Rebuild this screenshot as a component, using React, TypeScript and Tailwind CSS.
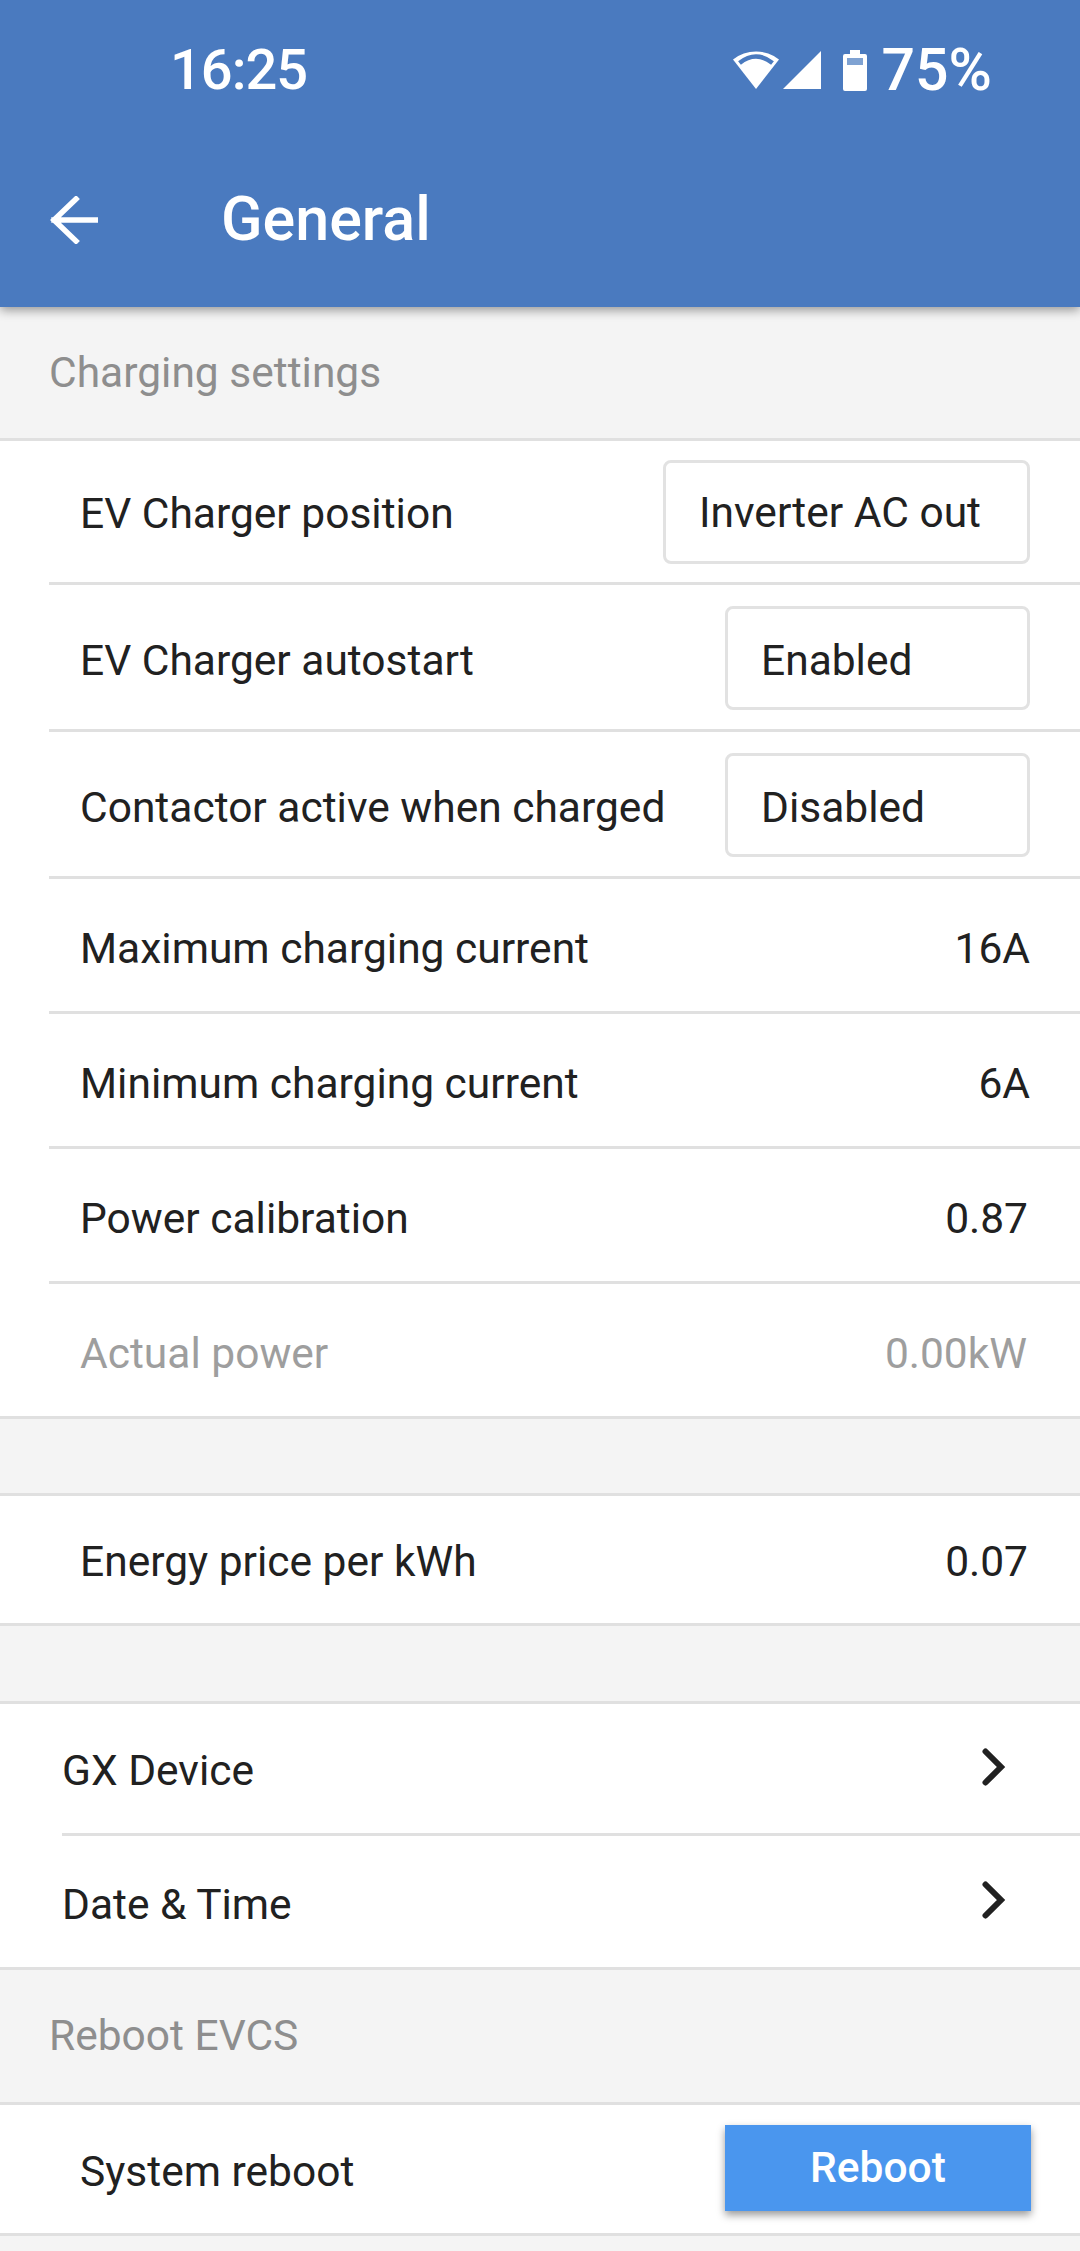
const font = { fontFamily: "Roboto, sans-serif" };

function Box({ w, s, children }: { w: string; s: string; children: React.ReactNode }) {
  return (
    <div className={`${w} ${s} h-[104px] border-[3px] border-[#e2e2e2] rounded-[8px] flex items-center pl-[33px] text-[42.5px] text-[#212121] shrink-0`}>
      {children}
    </div>
  );
}

function Line({ h, extra = "", children }: { h: string; extra?: string; children: React.ReactNode }) {
  return (
    <div className="pl-[49px] bg-white">
      <div className={`${h} ${extra} border-b-[3px] border-[#e0e0e0] flex items-center justify-between pr-[50px]`}>
        {children}
      </div>
    </div>
  );
}

function Label({ children, grey = false, s = "pt-[8px]" }: { children: React.ReactNode; grey?: boolean; s?: string }) {
  return <span className={`pl-[31px] ${s} text-[42.5px] ${grey ? "text-[#9e9e9e]" : "text-[#212121]"}`}>{children}</span>;
}

function Value({ children, grey = false, s = "pt-[8px]" }: { children: React.ReactNode; grey?: boolean; s?: string }) {
  return <span className={`${s} text-[42.5px] ${grey ? "text-[#9e9e9e]" : "text-[#212121]"}`}>{children}</span>;
}

function Chevron() {
  return (
    <svg width="24" height="38" viewBox="0 0 24 38" className="mb-[3px]">
      <path d="M3.5 3.5 L19 19 L3.5 34.5" fill="none" stroke="#212121" strokeWidth="6" strokeLinecap="round" />
    </svg>
  );
}

export default function App() {
  return (
    <div style={font} className="w-[1080px] h-[2251px] bg-[#f4f4f4] overflow-hidden">
      <header className="relative z-10 h-[307px] bg-[#4a7abf] shadow-[0_3px_10px_rgba(0,0,0,0.4)] text-white">
        <div className="h-[140px] flex items-start justify-between pl-[170px] pr-[88px] pt-[35px]">
          <span className="text-[56px] font-medium leading-[70px] tracking-[-1px]">16:25</span>
          <div className="flex items-center h-[70px]">
            <svg width="46" height="38" viewBox="0 0 46 38" className="mr-[4px]">
              <path d="M23 38 L0 8.5 A37 37 0 0 1 46 8.5 Z" fill="#fff" />
              <path d="M6.5 12 Q23 -1 39.5 12" fill="none" stroke="#4a7abf" strokeWidth="4.5" />
            </svg>
            <svg width="38" height="38" viewBox="0 0 38 38" className="mr-[22px]">
              <path d="M0 38 L38 0 V38 Z" fill="#fff" />
            </svg>
            <svg width="24" height="41" viewBox="0 0 24 41" className="mr-[14px]">
              <path d="M7 0 H17 V4 H22 Q24 4 24 6 V39 Q24 41 22 41 H2 Q0 41 0 39 V6 Q0 4 2 4 H7 Z" fill="#fff" />
              <rect x="4" y="8" width="16" height="7" fill="#7fa2d2" />
            </svg>
            <span className="text-[59px] font-medium leading-[70px]">75%</span>
          </div>
        </div>
        <div className="flex items-center h-[160px] pl-[50px]">
          <svg width="48" height="48" viewBox="0 0 48 48">
            <path d="M47 24 H4 M26 3 L4 24 L26 45" fill="none" stroke="#fff" strokeWidth="5.5" strokeLinecap="square" />
          </svg>
          <h1 className="ml-[123px] text-[61px] font-medium">General</h1>
        </div>
      </header>

      <div className="h-[134px] border-b-[3px] border-[#e0e0e0] flex items-center pl-[49px] text-[42.5px] text-[#8e8e8e]">
        Charging settings
      </div>

      <Line h="h-[144px]">
        <Label s="pt-[4px]">EV Charger position</Label>
        <Box w="w-[367px]" s="pt-[3px]">Inverter AC out</Box>
      </Line>
      <Line h="h-[147px]" extra="pt-[2px]">
        <Label s="pt-[6px]">EV Charger autostart</Label>
        <Box w="w-[305px]" s="pt-[6px]">Enabled</Box>
      </Line>
      <Line h="h-[147px]" extra="pt-[2px]">
        <Label s="pt-[6px]">Contactor active when charged</Label>
        <Box w="w-[305px]" s="pt-[6px]">Disabled</Box>
      </Line>
      <Line h="h-[135px]">
        <Label>Maximum charging current</Label>
        <Value>16A</Value>
      </Line>
      <Line h="h-[135px]">
        <Label>Minimum charging current</Label>
        <Value>6A</Value>
      </Line>
      <div className="pl-[49px] bg-white">
        <div className="h-[135px] border-b-[3px] border-[#e0e0e0] flex items-center justify-between pr-[52px]">
          <Label>Power calibration</Label>
          <Value>0.87</Value>
        </div>
      </div>
      <div className="bg-white border-b-[3px] border-[#e0e0e0]">
        <div className="pl-[49px] pr-[53px] h-[132px] flex items-center justify-between">
          <Label grey>Actual power</Label>
          <Value grey>0.00kW</Value>
        </div>
      </div>

      <div className="h-[77px] border-b-[3px] border-[#e0e0e0]" />
      <div className="bg-white border-b-[3px] border-[#e0e0e0] h-[130px] pl-[49px] pr-[52px] flex items-center justify-between">
        <Label s="pt-[4px]">Energy price per kWh</Label>
        <Value s="pt-[4px]">0.07</Value>
      </div>
      <div className="h-[78px] border-b-[3px] border-[#e0e0e0]" />

      <div className="pl-[62px] bg-white">
        <div className="h-[132px] border-b-[3px] border-[#e0e0e0] flex items-center justify-between pr-[74px]">
          <span className="pt-[4px] text-[42.5px] text-[#212121]">GX Device</span>
          <Chevron />
        </div>
      </div>
      <div className="bg-white border-b-[3px] border-[#e0e0e0] h-[134px] pl-[62px] pr-[74px] flex items-center justify-between">
        <span className="pt-[6px] text-[42.5px] text-[#212121]">Date &amp; Time</span>
        <Chevron />
      </div>

      <div className="h-[135px] border-b-[3px] border-[#e0e0e0] flex items-center pl-[49px] text-[42.5px] text-[#8e8e8e]">
        Reboot EVCS
      </div>

      <div className="bg-white border-b-[3px] border-[#e0e0e0] h-[131px] pl-[49px] pr-[49px] flex items-center justify-between">
        <Label s="pt-[6px]">System reboot</Label>
        <button className="w-[306px] h-[86px] mb-[2px] bg-[#4a96ee] text-white text-[42.5px] font-medium shadow-[0_4px_8px_rgba(0,0,0,0.4)]">
          Reboot
        </button>
      </div>
    </div>
  );
}
